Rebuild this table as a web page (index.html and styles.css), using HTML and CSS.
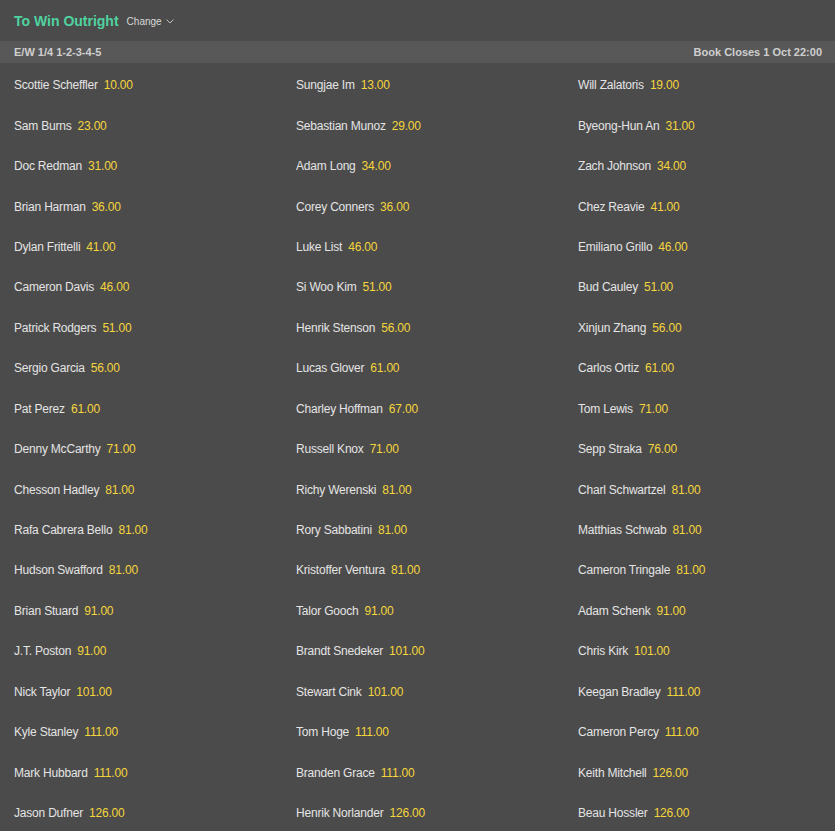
FILE: index.html
```html
<!DOCTYPE html>
<html lang="en">
<head>
    <meta charset="UTF-8">
    <meta name="viewport" content="width=device-width, initial-scale=1.0">
    <title>To Win Outright</title>
    <link rel="stylesheet" href="styles.css">
</head>
<body>

<div class="market">
    <div class="market-header">
        <h1>To Win Outright</h1>
        <span class="change">Change
            <svg width="8" height="5" viewBox="0 0 8 5"><path d="M0.5 0.5 L4 4 L7.5 0.5" fill="none" stroke="#bdbdbd" stroke-width="1"/></svg>
        </span>
    </div>

    <div class="terms">
        <span>E/W 1/4 1-2-3-4-5</span>
        <span>Book Closes 1 Oct 22:00</span>
    </div>

    <div class="runners">
        <div class="runner"><span class="name">Scottie Scheffler</span><span class="odds">10.00</span></div>
        <div class="runner"><span class="name">Sungjae Im</span><span class="odds">13.00</span></div>
        <div class="runner"><span class="name">Will Zalatoris</span><span class="odds">19.00</span></div>

        <div class="runner"><span class="name">Sam Burns</span><span class="odds">23.00</span></div>
        <div class="runner"><span class="name">Sebastian Munoz</span><span class="odds">29.00</span></div>
        <div class="runner"><span class="name">Byeong-Hun An</span><span class="odds">31.00</span></div>

        <div class="runner"><span class="name">Doc Redman</span><span class="odds">31.00</span></div>
        <div class="runner"><span class="name">Adam Long</span><span class="odds">34.00</span></div>
        <div class="runner"><span class="name">Zach Johnson</span><span class="odds">34.00</span></div>

        <div class="runner"><span class="name">Brian Harman</span><span class="odds">36.00</span></div>
        <div class="runner"><span class="name">Corey Conners</span><span class="odds">36.00</span></div>
        <div class="runner"><span class="name">Chez Reavie</span><span class="odds">41.00</span></div>

        <div class="runner"><span class="name">Dylan Frittelli</span><span class="odds">41.00</span></div>
        <div class="runner"><span class="name">Luke List</span><span class="odds">46.00</span></div>
        <div class="runner"><span class="name">Emiliano Grillo</span><span class="odds">46.00</span></div>

        <div class="runner"><span class="name">Cameron Davis</span><span class="odds">46.00</span></div>
        <div class="runner"><span class="name">Si Woo Kim</span><span class="odds">51.00</span></div>
        <div class="runner"><span class="name">Bud Cauley</span><span class="odds">51.00</span></div>

        <div class="runner"><span class="name">Patrick Rodgers</span><span class="odds">51.00</span></div>
        <div class="runner"><span class="name">Henrik Stenson</span><span class="odds">56.00</span></div>
        <div class="runner"><span class="name">Xinjun Zhang</span><span class="odds">56.00</span></div>

        <div class="runner"><span class="name">Sergio Garcia</span><span class="odds">56.00</span></div>
        <div class="runner"><span class="name">Lucas Glover</span><span class="odds">61.00</span></div>
        <div class="runner"><span class="name">Carlos Ortiz</span><span class="odds">61.00</span></div>

        <div class="runner"><span class="name">Pat Perez</span><span class="odds">61.00</span></div>
        <div class="runner"><span class="name">Charley Hoffman</span><span class="odds">67.00</span></div>
        <div class="runner"><span class="name">Tom Lewis</span><span class="odds">71.00</span></div>

        <div class="runner"><span class="name">Denny McCarthy</span><span class="odds">71.00</span></div>
        <div class="runner"><span class="name">Russell Knox</span><span class="odds">71.00</span></div>
        <div class="runner"><span class="name">Sepp Straka</span><span class="odds">76.00</span></div>

        <div class="runner"><span class="name">Chesson Hadley</span><span class="odds">81.00</span></div>
        <div class="runner"><span class="name">Richy Werenski</span><span class="odds">81.00</span></div>
        <div class="runner"><span class="name">Charl Schwartzel</span><span class="odds">81.00</span></div>

        <div class="runner"><span class="name">Rafa Cabrera Bello</span><span class="odds">81.00</span></div>
        <div class="runner"><span class="name">Rory Sabbatini</span><span class="odds">81.00</span></div>
        <div class="runner"><span class="name">Matthias Schwab</span><span class="odds">81.00</span></div>

        <div class="runner"><span class="name">Hudson Swafford</span><span class="odds">81.00</span></div>
        <div class="runner"><span class="name">Kristoffer Ventura</span><span class="odds">81.00</span></div>
        <div class="runner"><span class="name">Cameron Tringale</span><span class="odds">81.00</span></div>

        <div class="runner"><span class="name">Brian Stuard</span><span class="odds">91.00</span></div>
        <div class="runner"><span class="name">Talor Gooch</span><span class="odds">91.00</span></div>
        <div class="runner"><span class="name">Adam Schenk</span><span class="odds">91.00</span></div>

        <div class="runner"><span class="name">J.T. Poston</span><span class="odds">91.00</span></div>
        <div class="runner"><span class="name">Brandt Snedeker</span><span class="odds">101.00</span></div>
        <div class="runner"><span class="name">Chris Kirk</span><span class="odds">101.00</span></div>

        <div class="runner"><span class="name">Nick Taylor</span><span class="odds">101.00</span></div>
        <div class="runner"><span class="name">Stewart Cink</span><span class="odds">101.00</span></div>
        <div class="runner"><span class="name">Keegan Bradley</span><span class="odds">111.00</span></div>

        <div class="runner"><span class="name">Kyle Stanley</span><span class="odds">111.00</span></div>
        <div class="runner"><span class="name">Tom Hoge</span><span class="odds">111.00</span></div>
        <div class="runner"><span class="name">Cameron Percy</span><span class="odds">111.00</span></div>

        <div class="runner"><span class="name">Mark Hubbard</span><span class="odds">111.00</span></div>
        <div class="runner"><span class="name">Branden Grace</span><span class="odds">111.00</span></div>
        <div class="runner"><span class="name">Keith Mitchell</span><span class="odds">126.00</span></div>

        <div class="runner"><span class="name">Jason Dufner</span><span class="odds">126.00</span></div>
        <div class="runner"><span class="name">Henrik Norlander</span><span class="odds">126.00</span></div>
        <div class="runner"><span class="name">Beau Hossler</span><span class="odds">126.00</span></div>
    </div>
</div>

</body>
</html>
```

FILE: styles.css
```css
body {
    margin: 0;
    background-color: #4b4b4b;
    font-family: "Liberation Sans", Arial, sans-serif;
    overflow: hidden;
}
.market {
    width: 835px;
}
.market-header {
    display: flex;
    align-items: center;
    height: 41px;
    padding-left: 14px;
}
h1 {
    margin: 0;
    font-size: 14px;
    font-weight: bold;
    color: #4fd3a0;
}
.change {
    margin-left: 8px;
    font-size: 10px;
    color: #d8d8d8;
    display: flex;
    align-items: center;
    gap: 4px;
    padding-top: 2px;
}
.terms {
    display: flex;
    justify-content: space-between;
    align-items: center;
    height: 22px;
    padding: 0 13px 0 14px;
    background-color: #585858;
    font-size: 11px;
    font-weight: bold;
    color: #cfcfcf;
}
.runners {
    display: grid;
    grid-template-columns: 282px 282px 282px;
    grid-auto-rows: 40.45px;
    padding-left: 14px;
    padding-top: 2px;
}
.runner {
    display: flex;
    align-items: center;
    font-size: 12px;
    letter-spacing: -0.2px;
    white-space: nowrap;
}
.name {
    color: #e4e4e4;
}
.odds {
    color: #f5d53c;
    margin-left: 6px;
}
```
